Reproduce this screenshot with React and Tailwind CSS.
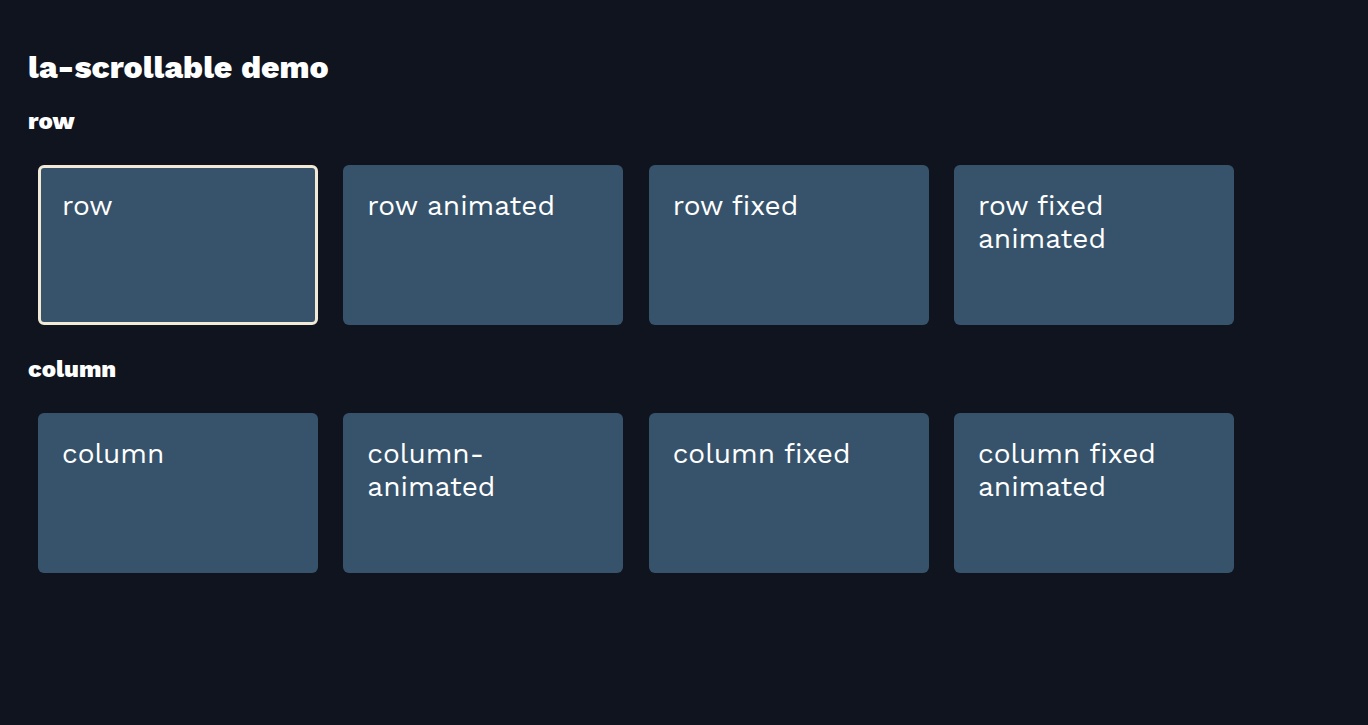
export default function App() {
  const rows = ["row", "row animated", "row fixed", "row fixed animated"];
  const cols = ["column", "column-animated", "column fixed", "column fixed animated"];
  const Card = ({ label, selected }) => (
    <div
      className={
        "w-[280px] h-[160px] shrink-0 rounded-[6px] bg-[#36536b] text-white text-[28px] leading-[33px] " +
        (selected ? "border-[3px] border-[#f1ead6] px-[21px] pt-[21px]" : "px-[24px] pt-[24px]")
      }
    >
      {label}
    </div>
  );
  return (
    <div
      className="min-h-screen w-full bg-[#10141f] text-white px-[28px] pt-[50px]"
      style={{ fontFamily: '"Work Sans", Inter, "Noto Sans", sans-serif' }}
    >
      <h1 className="text-[32px] leading-[34px] font-extrabold">la-scrollable demo</h1>
      <h2 className="mt-[25px] text-[24px] leading-[24px] font-extrabold">row</h2>
      <div className="mt-[22px] flex gap-[25.33px] p-[10px]">
        {rows.map((r, i) => (
          <Card key={r} label={r} selected={i === 0} />
        ))}
      </div>
      <h2 className="mt-[22px] text-[24px] leading-[24px] font-extrabold">column</h2>
      <div className="mt-[22px] flex gap-[25.33px] p-[10px]">
        {cols.map((r) => (
          <Card key={r} label={r} />
        ))}
      </div>
    </div>
  );
}
